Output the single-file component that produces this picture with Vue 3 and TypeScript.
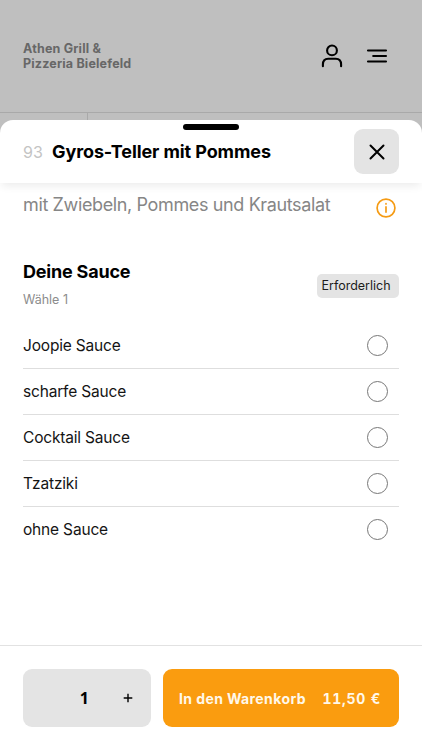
<script setup lang="ts">
import { ref } from 'vue'

interface Sauce {
  id: string
  label: string
}

const sauces: Sauce[] = [
  { id: 'joopie', label: 'Joopie Sauce' },
  { id: 'scharf', label: 'scharfe Sauce' },
  { id: 'cocktail', label: 'Cocktail Sauce' },
  { id: 'tzatziki', label: 'Tzatziki' },
  { id: 'ohne', label: 'ohne Sauce' },
]

const selected = ref<string | null>(null)
const quantity = ref<number>(1)
</script>

<template>
  <div class="screen">
    <header class="topbar">
      <div class="brand">Athen Grill &amp;<br />Pizzeria Bielefeld</div>
      <div class="actions">
        <svg width="22" height="24" viewBox="0 0 22 24" class="icon">
          <circle cx="11" cy="6.4" r="4.9" />
          <path d="M1.900 22.200v-1.600c0-3.600 2-5.800 5.300-5.800h7.600c3.300 0 5.300 2.200 5.300 5.800v1.600" />
        </svg>
        <svg width="22" height="16" viewBox="0 0 22 16" class="icon">
          <path d="M2 2.500h18M7.200 8h12.800M2 13.500h18" />
        </svg>
      </div>
    </header>
    <div class="strip"><div class="strip-cell"></div></div>

    <main class="sheet">
      <div class="handle"></div>
      <div class="sheet-head">
        <span class="number">93</span>
        <h1 class="title">Gyros-Teller mit Pommes</h1>
        <button class="close" aria-label="Schließen">
          <svg width="17" height="17" viewBox="0 0 17 17" class="icon cross">
            <path d="M2.500 2.500l13 13M15.500 2.500L2.500 15.500" />
          </svg>
        </button>
      </div>

      <div class="description">
        <p class="desc-text">mit Zwiebeln, Pommes und Krautsalat</p>
        <svg class="info" width="20" height="20" viewBox="0 0 20 20">
          <circle cx="10" cy="10" r="8.900" />
          <path d="M10 8.900v5.200" />
          <path d="M10 5.700v0.300" />
        </svg>
      </div>

      <section class="group">
        <div class="group-head">
          <div>
            <h2 class="group-title">Deine Sauce</h2>
            <div class="hint">Wähle 1</div>
          </div>
          <span class="badge">Erforderlich</span>
        </div>
        <ul class="options">
          <li v-for="s in sauces" :key="s.id" class="option" @click="selected = s.id">
            <span>{{ s.label }}</span>
            <span class="radio" :class="{ on: selected === s.id }"></span>
          </li>
        </ul>
      </section>

      <footer class="footer">
        <div class="stepper">
          <span class="count">{{ quantity }}</span>
          <button class="plus" aria-label="Mehr" @click="quantity++">
            <svg width="10" height="10" viewBox="0 0 10 10"><path d="M5 0.700v8.600M0.700 5h8.600" /></svg>
          </button>
        </div>
        <button class="cart">
          <span class="cart-label">In den Warenkorb</span>
          <span class="price">11,50 €</span>
        </button>
      </footer>
    </main>
  </div>
</template>

<style>
body {
  margin: 0;
  background: #bfbfbf;
}
</style>

<style scoped>
* {
  box-sizing: border-box;
}
.screen {
  width: 422px;
  height: 750px;
  display: flex;
  flex-direction: column;
  overflow: hidden;
  background: #bfbfbf;
  font-family: Inter, "Liberation Sans", sans-serif;
  color: #000;
}
button {
  border: 0;
  padding: 0;
  font: inherit;
  color: inherit;
}
.topbar {
  height: 113px;
  flex: none;
  display: flex;
  justify-content: space-between;
  align-items: center;
  padding: 0 34px 0 23px;
  border-bottom: 1px solid #a9a9a9;
}
.brand {
  font-size: 12.5px;
  line-height: 15px;
  font-weight: 700;
  letter-spacing: 0.18px;
  color: #676767;
}
.actions {
  display: flex;
  align-items: center;
  gap: 23px;
}
.icon {
  fill: none;
  stroke: #000;
  stroke-width: 2.1;
  stroke-linecap: round;
  stroke-linejoin: round;
}
.strip {
  height: 23px;
  flex: none;
}
.strip-cell {
  width: 88px;
  height: 100%;
  border-right: 1px solid #a9a9a9;
}
.sheet {
  flex: none;
  height: 630px;
  margin-top: -16px;
  display: flex;
  flex-direction: column;
  background: #fff;
  border-radius: 13px 13px 0 0;
}
.handle {
  flex: none;
  width: 56px;
  height: 6px;
  margin: 4px auto -10px;
  border-radius: 3px;
  background: #000;
}
.sheet-head {
  flex: none;
  height: 63px;
  display: flex;
  align-items: center;
  padding: 0 23px;
  border-radius: 13px 13px 0 0;
  box-shadow: 0 5px 8px -2px rgba(0, 0, 0, 0.08);
}
.number {
  font-size: 16px;
  color: #c4c4c4;
  width: 29px;
}
.title {
  flex: 1;
  margin: 0;
  font-size: 18px;
  line-height: 24px;
  font-weight: 700;
  letter-spacing: -0.1px;
}
.close {
  width: 45px;
  height: 45px;
  display: flex;
  align-items: center;
  justify-content: center;
  border-radius: 9px;
  background: #e4e4e4;
}
.cross {
  stroke-width: 2;
}
.description {
  flex: none;
  display: flex;
  justify-content: space-between;
  padding: 10px 26px 0 23px;
}
.desc-text {
  margin: 0;
  font-size: 18px;
  line-height: 24px;
  letter-spacing: -0.37px;
  color: #868686;
}
.info {
  margin-top: 5px;
  fill: none;
  stroke: #f59b14;
  stroke-width: 1.7;
  stroke-linecap: round;
}
.group {
  padding: 41px 23px 0;
}
.group-head {
  display: flex;
  justify-content: space-between;
  align-items: center;
  height: 54px;
}
.group-title {
  margin: -4px 0 0;
  font-size: 18px;
  line-height: 24px;
  font-weight: 700;
  letter-spacing: -0.2px;
}
.hint {
  margin-top: 7px;
  font-size: 12.5px;
  line-height: 18px;
  color: #8c8c8c;
}
.badge {
  width: 82px;
  height: 24px;
  padding-left: 4.500px;
  border-radius: 5px;
  background: #e4e4e4;
  color: #1c1c1c;
  font-size: 12.5px;
  line-height: 24px;
}
.options {
  list-style: none;
  margin: 10px 0 0;
  padding: 0;
}
.option {
  height: 46px;
  display: flex;
  align-items: center;
  justify-content: space-between;
  padding-right: 11px;
  border-bottom: 1px solid #dedede;
  font-size: 15.5px;
  letter-spacing: -0.18px;
  color: #141414;
}
.option:last-child {
  border-bottom-color: transparent;
}
.radio {
  width: 21px;
  height: 21px;
  border: 1px solid #777;
  border-radius: 50%;
}
.radio.on {
  border: 6px solid #fa9c0f;
}
.footer {
  flex: none;
  height: 105px;
  margin-top: auto;
  display: flex;
  gap: 12px;
  padding: 23px 23px 0;
  border-top: 1px solid #e2e2e2;
}
.stepper {
  width: 128px;
  height: 58px;
  display: flex;
  align-items: center;
  justify-content: flex-end;
  gap: 34px;
  padding-right: 18px;
  border-radius: 9px;
  background: #e4e4e4;
}
.count {
  font-family: "Noto Sans", Inter, sans-serif;
  font-size: 16px;
  line-height: 20px;
  font-weight: 700;
}
.plus {
  display: flex;
  background: none;
}
.plus svg {
  fill: none;
  stroke: #000;
  stroke-width: 1.4;
}
.cart {
  flex: 1;
  height: 58px;
  display: flex;
  align-items: center;
  justify-content: space-between;
  padding: 0 18px 0 16px;
  border-radius: 9px;
  background: #fa9c0f;
  color: #fff8ea;
  font-size: 14px;
  font-weight: 700;
}
.cart-label {
  letter-spacing: 0.4px;
}
.price {
  font-feature-settings: "tnum";
  letter-spacing: 0.75px;
}
</style>
